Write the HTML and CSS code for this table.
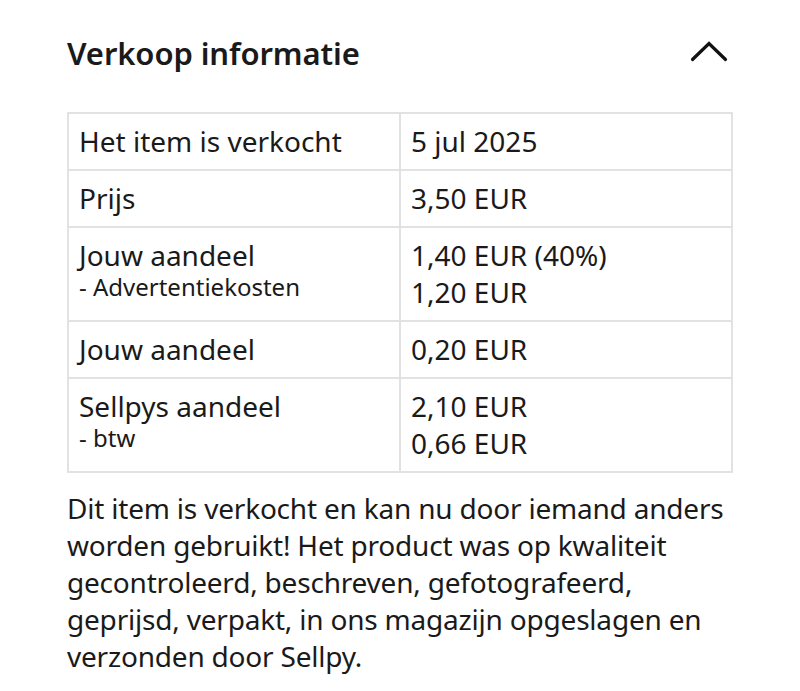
FILE: index.html
```html
<!DOCTYPE html>
<html lang="nl">
<head>
<meta charset="utf-8">
<link rel="stylesheet" href="styles.css">
</head>
<body>
<section class="panel">
  <header class="head">
    <h2 class="title">Verkoop informatie</h2>
    <svg class="chev" width="38" height="22" viewBox="0 0 38 22"><path d="M2.5 18.5 L19 2.5 L35.5 18.5" fill="none" stroke="#111" stroke-width="3.2" stroke-linecap="round" stroke-linejoin="miter"/></svg>
  </header>
  <table class="info">
    <tr><td class="k">Het item is verkocht</td><td class="v">5 jul 2025</td></tr>
    <tr><td class="k">Prijs</td><td class="v">3,50 EUR</td></tr>
    <tr><td class="k">Jouw aandeel<span class="sub">- Advertentiekosten</span></td><td class="v">1,40 EUR (40%)<br>1,20 EUR</td></tr>
    <tr><td class="k">Jouw aandeel</td><td class="v">0,20 EUR</td></tr>
    <tr><td class="k">Sellpys aandeel<span class="sub">- btw</span></td><td class="v">2,10 EUR<br>0,66 EUR</td></tr>
  </table>
  <p class="desc">Dit item is verkocht en kan nu door iemand anders worden gebruikt! Het product was op kwaliteit gecontroleerd, beschreven, gefotografeerd, geprijsd, verpakt, in ons magazijn opgeslagen en verzonden door Sellpy.</p>
</section>
</body>
</html>
```
FILE: styles.css
```css
html, body { margin: 0; padding: 0; background: #fff; }
body { font-family: "Noto Sans", "DejaVu Sans", sans-serif; color: #1a1a1a; }
.panel { width: 666px; padding: 28px 0 0 67px; }
.head { display: flex; justify-content: space-between; align-items: flex-start; height: 84px; }
.title { margin: 0; font-size: 31px; font-weight: 600; line-height: 50px; letter-spacing: -0.1px; }
.chev { margin-top: 13px; margin-right: 5px; }
.info { width: 666px; border-collapse: collapse; font-size: 28px; line-height: 37px; }
.info td { border: 2px solid #e2e2e2; padding: 9px 10px; vertical-align: top; }
.info td.k { width: 310px; }
.sub { display: block; font-size: 24px; line-height: 26px; }
.desc { margin: 17px 0 0; font-size: 28px; line-height: 37px; letter-spacing: -0.2px; }
```
